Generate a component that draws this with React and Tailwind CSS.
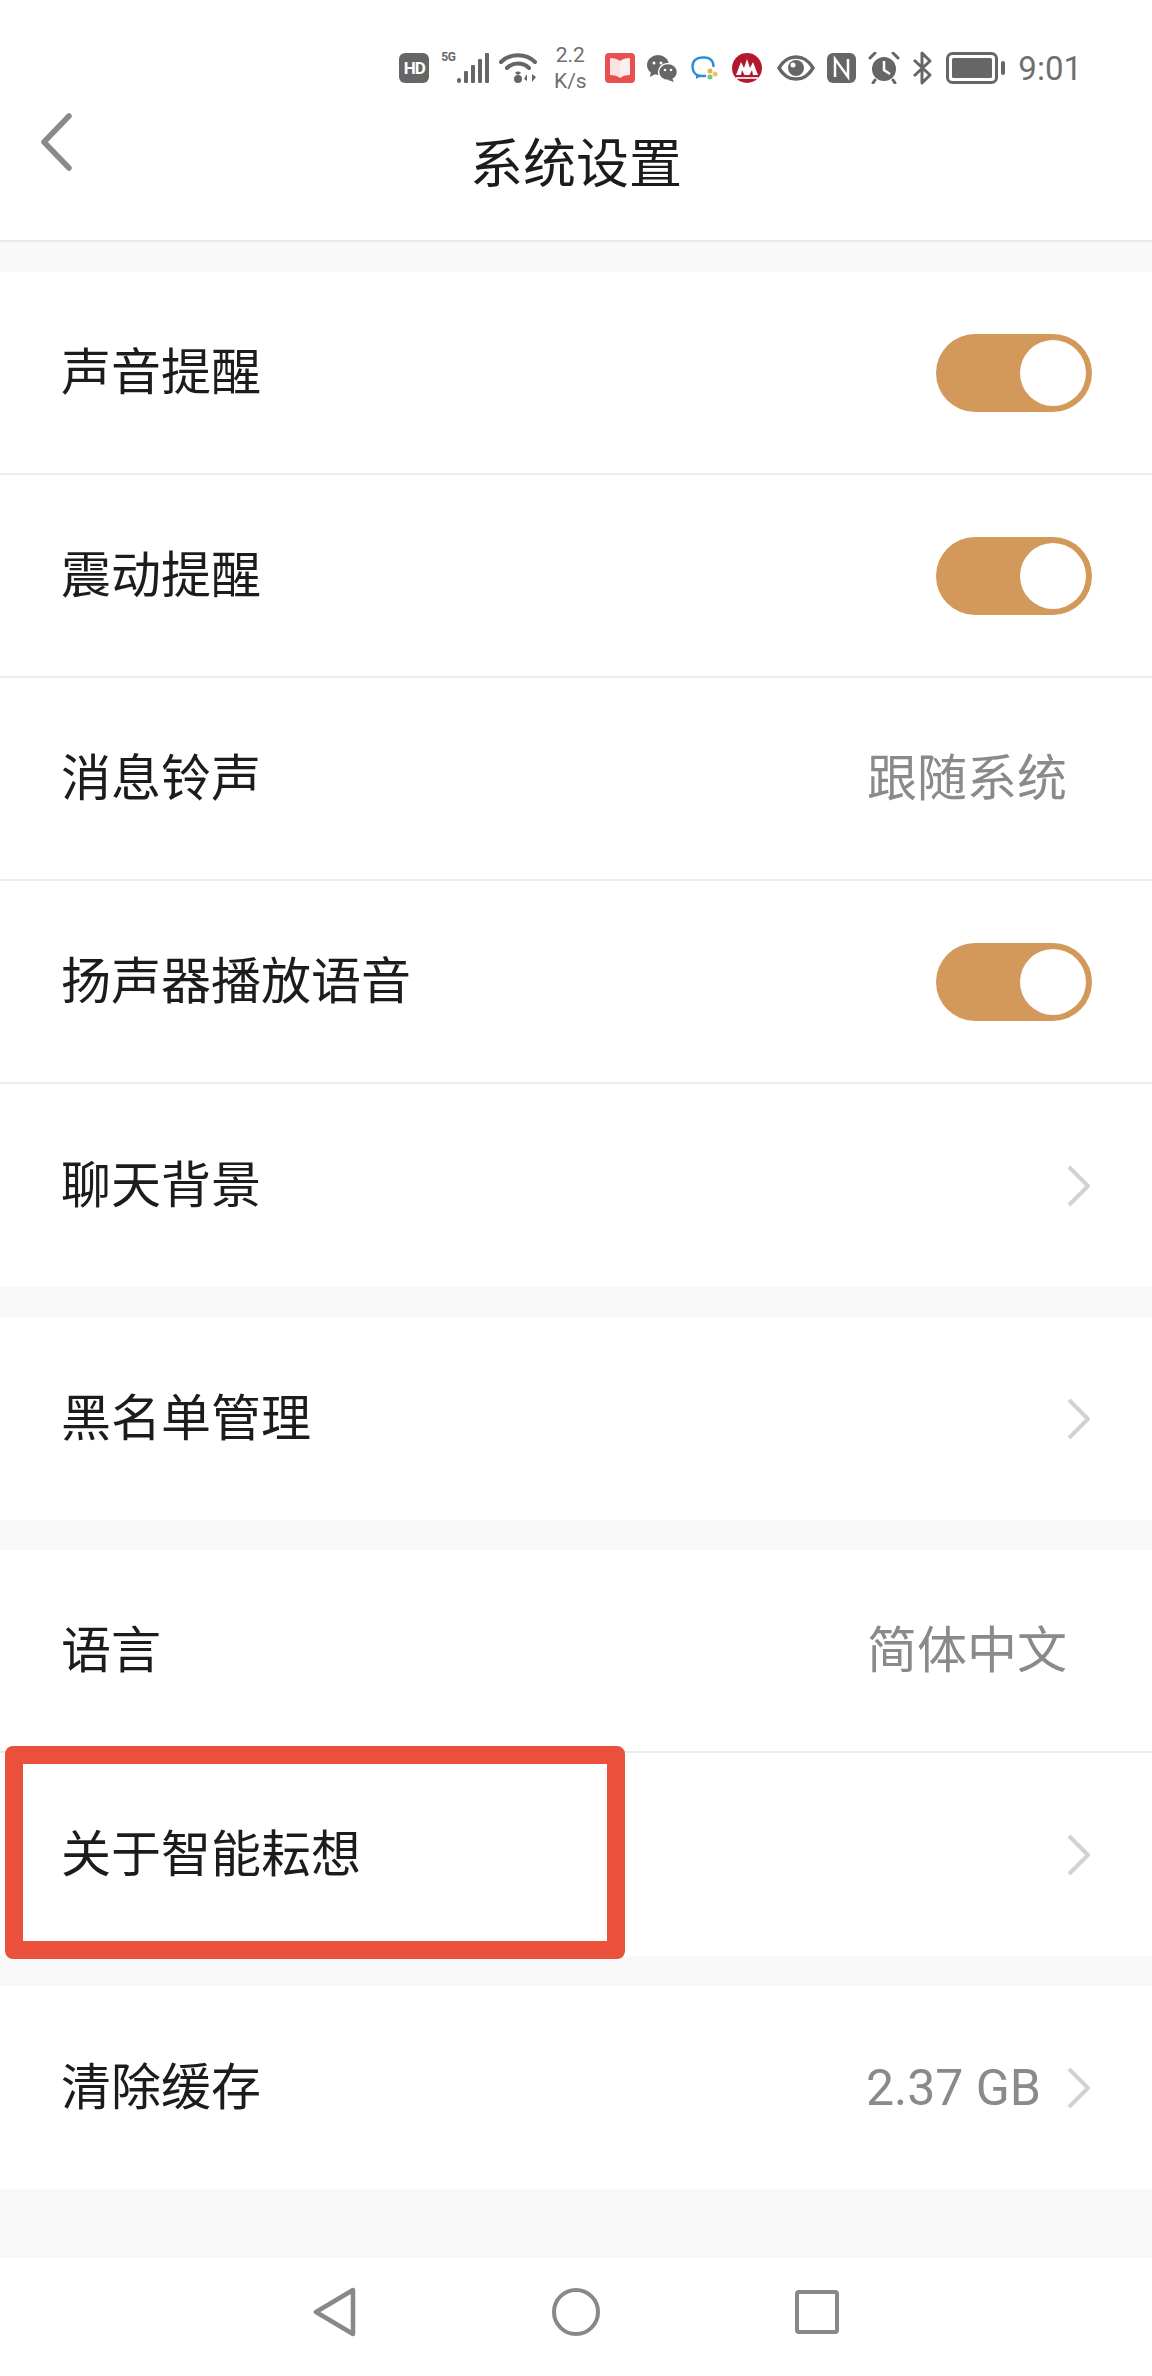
import React from "react";

const FONT = "font-['Roboto','Noto_Sans_CJK_SC',sans-serif]";

const Chevron = () => (
  <svg width="24" height="42" viewBox="0 0 24 42" className="block">
    <path d="M2 2 L21 21 L2 40" fill="none" stroke="#d2d2d2" strokeWidth="4" strokeLinejoin="round" />
  </svg>
);

const Toggle = () => (
  <div className="flex h-[78px] w-[156px] items-center justify-end rounded-full bg-[#d2995b] pr-[6px]">
    <div className="h-[66px] w-[66px] rounded-full bg-white" />
  </div>
);

const Row = ({ label, value, toggle, arrow, last }) => (
  <div className={`flex h-[203px] items-center bg-white pl-[61px] ${last ? "" : "border-b-2 border-[#ececec]"}`}>
    <span className="flex-1 text-[50px] leading-none text-[#1c1c1c]">{label}</span>
    {toggle && (
      <div className="mr-[60px]">
        <Toggle />
      </div>
    )}
    {value && <span className={`text-[50px] leading-none text-[#8a8a8a] ${arrow ? "mr-[26px]" : "mr-[85px]"}`}>{value}</span>}
    {arrow && (
      <div className="mr-[61px]">
        <Chevron />
      </div>
    )}
  </div>
);

const StatusBar = () => (
  <div className="flex h-[90px] items-center justify-end pt-[46px] pr-[70px]">
    {/* HD */}
    <div className="flex h-[30px] w-[30px] items-center justify-center rounded-[6px] bg-[#666] text-[17px] font-bold leading-none tracking-[-1px] text-white">
      HD
    </div>
    {/* 5G + signal */}
    <div className="relative ml-[12px] h-[30px] w-[48px]">
      <span className="absolute left-0 top-[-2px] text-[12px] font-bold leading-none tracking-[-0.5px] text-[#666]">5G</span>
      <svg width="48" height="30" viewBox="0 0 48 30" className="block">
        <g fill="#666">
          <rect x="16" y="25" width="4" height="5" rx="2" />
          <rect x="23" y="18" width="4" height="12" rx="1" />
          <rect x="30" y="12" width="4" height="18" rx="1" />
          <rect x="37" y="6" width="4" height="24" rx="1" />
          <rect x="44" y="0" width="4" height="30" rx="1" />
        </g>
      </svg>
    </div>
    {/* wifi */}
    <svg width="38" height="30" viewBox="0 0 38 30" className="ml-[10px] block">
      <g fill="none" stroke="#666" strokeWidth="4" strokeLinecap="round">
        <path d="M2 9 C 11 0, 27 0, 36 9" />
        <path d="M8 15 C 14 9, 24 9, 30 15" />
      </g>
      <circle cx="19" cy="26" r="4" fill="#666" />
      <path d="M16 20 C 17.500 18, 20.500 18, 22 20 L19 22 Z" fill="#666" />
      <path d="M28 28 V21 L25 26 Z M33 21 V29 L37 24 Z" fill="#666" />
    </svg>
    {/* speed */}
    <div className="ml-[16px] flex w-[34px] flex-col items-center text-[21px] leading-[26px] text-[#6f6f6f]">
      <span>2.2</span>
      <span>K/s</span>
    </div>
    {/* book */}
    <svg width="30" height="30" viewBox="0 0 30 30" className="ml-[18px] block">
      <rect width="30" height="30" rx="4" fill="#e8504f" />
      <path d="M5 5 C 9 5, 13 6, 15 8 V25 C 13 23, 9 22, 5 22 Z" fill="#fbe3e3" />
      <path d="M25 5 C 21 5, 17 6, 15 8 V25 C 17 23, 21 22, 25 22 Z" fill="#fdeeee" />
    </svg>
    {/* wechat */}
    <svg width="30" height="27" viewBox="0 0 30 27" className="ml-[12px] block">
      <ellipse cx="11" cy="10" rx="11" ry="10" fill="#666" />
      <path d="M4 16 L3 22 L10 18 Z" fill="#666" />
      <ellipse cx="21" cy="17" rx="9.500" ry="8.500" fill="#666" stroke="#fff" strokeWidth="1.500" />
      <path d="M25 23 L27 27 L21 25 Z" fill="#666" />
      <circle cx="7" cy="8" r="1.500" fill="#fff" />
      <circle cx="14" cy="8" r="1.500" fill="#fff" />
      <circle cx="18" cy="15" r="1.300" fill="#fff" />
      <circle cx="24" cy="15" r="1.300" fill="#fff" />
    </svg>
    {/* chat */}
    <svg width="27" height="25" viewBox="0 0 27 25" className="ml-[14px] block">
      <path d="M14 20 H11 C 5 20, 1.500 16, 1.500 10.500 C 1.500 5, 5.500 1.500 , 11 1.500 H14 C 19 1.500, 22.500 5, 22.500 10" fill="none" stroke="#2a8fd8" strokeWidth="2.500" strokeLinecap="round" />
      <path d="M5 18 V23 L10 20 Z" fill="#2a8fd8" />
      <circle cx="19" cy="15" r="2.500" fill="#e8b23c" />
      <circle cx="24" cy="18" r="2.500" fill="#e4c866" />
      <circle cx="19" cy="21" r="2.500" fill="#7cc08a" />
    </svg>
    {/* bank logo */}
    <svg width="30" height="30" viewBox="0 0 30 30" className="ml-[14px] block">
      <circle cx="15" cy="15" r="15" fill="#b2192f" />
      <path d="M4 22 L9 9 L12 15 L15 6 L18 15 L21 9 L26 22 H21 L20 17 L17.500 22 H12.500 L10 17 L9 22 Z" fill="#fff" />
      <rect x="4" y="24" width="22" height="2" fill="#f3d6da" />
    </svg>
    {/* eye */}
    <svg width="38" height="26" viewBox="0 0 38 26" className="ml-[15px] block">
      <path d="M2 13 C 8 3, 14 2, 19 2 C 24 2, 30 3, 36 13 C 30 23, 24 24, 19 24 C 14 24, 8 23, 2 13 Z" fill="none" stroke="#666" strokeWidth="3.500" strokeLinejoin="round" />
      <circle cx="19" cy="13" r="8" fill="#666" />
      <circle cx="16" cy="10" r="2.500" fill="#fff" />
    </svg>
    {/* nfc */}
    <svg width="29" height="30" viewBox="0 0 29 30" className="ml-[12px] block">
      <rect width="29" height="30" rx="6" fill="#666" />
      <path d="M8 24 V6 L21 24 V6" fill="none" stroke="#fff" strokeWidth="2.500" />
    </svg>
    {/* alarm */}
    <svg width="32" height="32" viewBox="0 0 32 32" className="ml-[12px] block">
      <circle cx="16" cy="17" r="12" fill="#666" />
      <path d="M16 9 V18 L22 22" fill="none" stroke="#fff" strokeWidth="2.500" />
      <path d="M2 6 L7 1 M30 6 L25 1 M7 28 L5 31 M25 28 L27 31" stroke="#666" strokeWidth="3" strokeLinecap="round" />
    </svg>
    {/* bluetooth */}
    <svg width="23" height="34" viewBox="0 0 23 34" className="ml-[11px] block">
      <path d="M3 9 L19 24 L11 32 V2 L19 10 L3 25" fill="none" stroke="#666" strokeWidth="3" strokeLinejoin="round" />
    </svg>
    {/* battery */}
    <svg width="60" height="32" viewBox="0 0 60 32" className="ml-[12px] block">
      <rect x="1.500" y="1.500" width="49" height="29" rx="5" fill="none" stroke="#666" strokeWidth="3" />
      <rect x="6" y="6" width="40" height="20" rx="1.500" fill="#666" />
      <rect x="55" y="9" width="4" height="14" rx="2" fill="#666" />
    </svg>
    <span className="ml-[12px] text-[33px] leading-none text-[#6f6f6f]">9:01</span>
  </div>
);

const Header = () => (
  <div className="border-b-2 border-[#e9e9e9] bg-white">
    <StatusBar />
    <div className="relative flex h-[150px] items-center justify-center">
      <svg width="34" height="58" viewBox="0 0 34 58" className="absolute left-[39px] top-[57px] block -translate-y-[34px]">
        <path d="M30 3 L5 29 L30 55" fill="none" stroke="#8a8a8a" strokeWidth="5.500" strokeLinecap="round" strokeLinejoin="round" />
      </svg>
      <span className="text-[53px] leading-none text-[#1c1c1c]">系统设置</span>
    </div>
  </div>
);

export default function App() {
  return (
    <div className={`relative flex h-[2376px] w-[1152px] flex-col overflow-hidden bg-[#f8f8f8] ${FONT}`}>
      <Header />

      <div className="mt-[30px]">
        <Row label="声音提醒" toggle />
        <Row label="震动提醒" toggle />
        <Row label="消息铃声" value="跟随系统" />
        <Row label="扬声器播放语音" toggle />
        <Row label="聊天背景" arrow last />
      </div>

      <div className="mt-[30px]">
        <Row label="黑名单管理" arrow last />
      </div>

      <div className="mt-[30px]">
        <Row label="语言" value="简体中文" />
        <Row label="关于智能耘想" arrow last />
      </div>

      <div className="mt-[30px]">
        <Row label="清除缓存" value="2.37 GB" arrow last />
      </div>

      {/* bottom nav */}
      <div className="mt-auto flex h-[118px] items-center justify-center gap-[195px] bg-white pb-[10px]">
        <svg width="44" height="50" viewBox="0 0 44 50" className="block">
          <path d="M40 3 V47 L3 25 Z" fill="none" stroke="#888" strokeWidth="4.500" strokeLinejoin="round" />
        </svg>
        <div className="h-[48px] w-[48px] rounded-full border-[4.500px] border-[#888]" />
        <div className="h-[44px] w-[44px] rounded-[4px] border-[4.500px] border-[#888]" />
      </div>

      {/* red highlight drawn on top of the screenshot */}
      <div className="absolute left-[5px] top-[1746px] h-[213px] w-[620px] rounded-[8px] border-[18px] border-[#ea503c]" />
    </div>
  );
}
